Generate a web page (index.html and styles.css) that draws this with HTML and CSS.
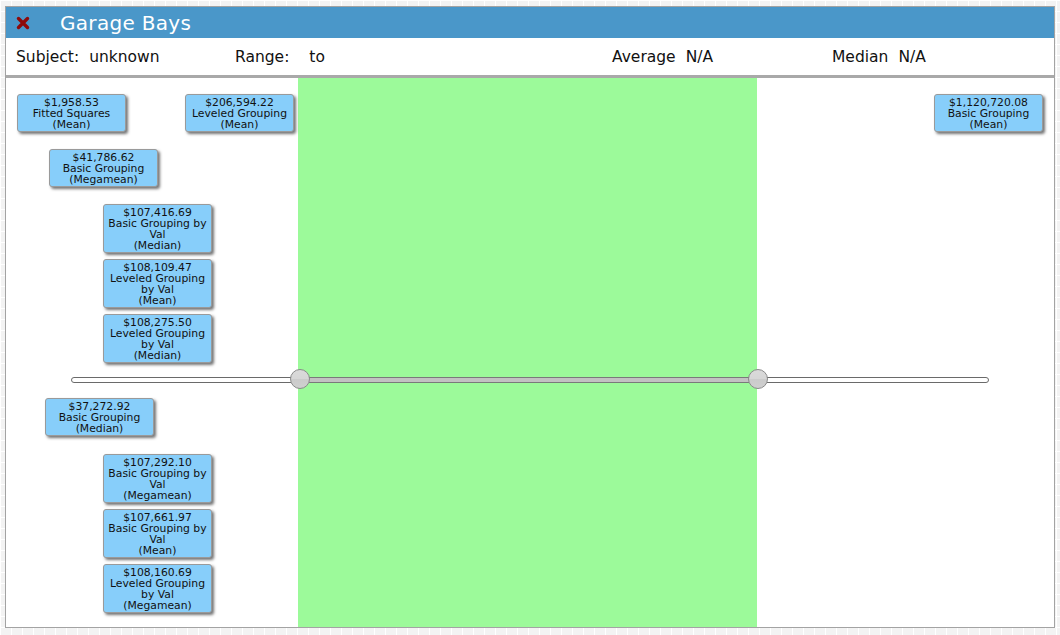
FILE: index.html
```html
<!DOCTYPE html>
<html>
<head>
<meta charset="utf-8">
<title>Garage Bays</title>
<link rel="stylesheet" href="styles.css">
</head>
<body>
<div class="panel">
  <div class="titlebar">
    <svg class="close" width="14" height="14" viewBox="0 0 14 14" aria-label="close">
      <path d="M2.5 2.5 L11.5 11.5 M11.5 2.5 L2.5 11.5" stroke="#8e0a0a" stroke-width="3.4" stroke-linecap="round"/>
    </svg>
    <span class="title">Garage Bays</span>
  </div>
  <div class="stats">
    <div class="field f-subject"><span class="label">Subject:</span><span class="value">unknown</span></div>
    <div class="field f-range"><span class="label">Range:</span><span class="value range-min"></span><span class="sep">to</span><span class="value range-max"></span></div>
    <div class="field f-avg"><span class="label">Average</span><span class="value">N/A</span></div>
    <div class="field f-med"><span class="label">Median</span><span class="value">N/A</span></div>
  </div>
  <div class="chart">
    <div class="band" style="left:292px;width:459px"></div>
    <div class="track" style="left:65px;width:918px"></div>
    <div class="fill" style="left:294px;width:458px"></div>
    <div class="handle" style="left:284px"></div>
    <div class="handle" style="left:742px"></div>

    <div class="est" style="left:11px;top:16px">$1,958.53<br>Fitted Squares<br>(Mean)</div>
    <div class="est" style="left:179px;top:16px">$206,594.22<br>Leveled Grouping<br>(Mean)</div>
    <div class="est" style="left:928px;top:16px">$1,120,720.08<br>Basic Grouping<br>(Mean)</div>
    <div class="est" style="left:43px;top:71px">$41,786.62<br>Basic Grouping<br>(Megamean)</div>
    <div class="est" style="left:97px;top:126px">$107,416.69<br>Basic Grouping by<br>Val<br>(Median)</div>
    <div class="est" style="left:97px;top:181px">$108,109.47<br>Leveled Grouping<br>by Val<br>(Mean)</div>
    <div class="est" style="left:97px;top:236px">$108,275.50<br>Leveled Grouping<br>by Val<br>(Median)</div>
    <div class="est" style="left:39px;top:320px">$37,272.92<br>Basic Grouping<br>(Median)</div>
    <div class="est" style="left:97px;top:376px">$107,292.10<br>Basic Grouping by<br>Val<br>(Megamean)</div>
    <div class="est" style="left:97px;top:431px">$107,661.97<br>Basic Grouping by<br>Val<br>(Mean)</div>
    <div class="est" style="left:97px;top:486px">$108,160.69<br>Leveled Grouping<br>by Val<br>(Megamean)</div>
  </div>
</div>
</body>
</html>
```

FILE: styles.css
```css
html, body {
  margin: 0;
  padding: 0;
}
body {
  width: 1060px;
  height: 635px;
  overflow: hidden;
  padding: 6px 0 0 5px;
  box-sizing: border-box;
  background-color: #f3f3f3;
  background-image:
    linear-gradient(to right, #ffffff 1px, transparent 1px),
    linear-gradient(to bottom, #ffffff 1px, transparent 1px);
  background-size: 11px 11px;
  font-family: "DejaVu Sans", "Open Sans", sans-serif;
  color: #111;
}
.panel {
  width: 1050px;
  box-sizing: border-box;
  border: 1px solid #a3a3a3;
  background: #fff;
  display: flex;
  flex-direction: column;
}
.titlebar {
  height: 31px;
  background: #4a97c9;
  display: flex;
  align-items: center;
  padding-left: 10px;
}
.close {
  display: block;
  margin-top: 1px;
}
.title {
  color: #fff;
  font-size: 20px;
  margin-left: 30px;
  letter-spacing: 0.3px;
}
.stats {
  height: 40px;
  border-bottom: 3px solid #a9a9a9;
  display: flex;
  align-items: center;
  font-size: 15.5px;
  padding-left: 10px;
  box-sizing: border-box;
}
.field {
  display: flex;
  white-space: nowrap;
}
.f-subject { width: 219px; }
.f-range { width: 377px; }
.f-avg { width: 220px; }
.value { margin-left: 10px; }
.range-min { margin-left: 20px; }
.range-max { margin-left: 0; }
.chart {
  position: relative;
  height: 549px;
  overflow: hidden;
}
.band {
  position: absolute;
  top: 0;
  bottom: 0;
  background: #9cfa9a;
}
.track {
  position: absolute;
  top: 299px;
  height: 6px;
  box-sizing: border-box;
  border: 1px solid #6a6a6a;
  border-radius: 3px;
  background: #fff;
}
.fill {
  position: absolute;
  top: 299px;
  height: 6px;
  box-sizing: border-box;
  border: 1px solid #7a7a7a;
  background: #c2c2c2;
}
.handle {
  position: absolute;
  top: 291px;
  width: 20px;
  height: 20px;
  box-sizing: border-box;
  border-radius: 50%;
  border: 1px solid #8a8a8a;
  background: linear-gradient(to bottom, #dadada 0%, #d6d6d6 50%, #cbcbcb 51%, #cfcfcf 100%);
}
.est {
  position: absolute;
  width: 109px;
  box-sizing: border-box;
  padding: 2px 2px 1px;
  border: 1px solid #9a9a9a;
  border-radius: 3px;
  background: #87cefa;
  box-shadow: 2px 2px 3px rgba(0, 0, 0, 0.55);
  font-size: 10.8px;
  line-height: 11px;
  text-align: center;
  color: #111;
  white-space: nowrap;
}
```
